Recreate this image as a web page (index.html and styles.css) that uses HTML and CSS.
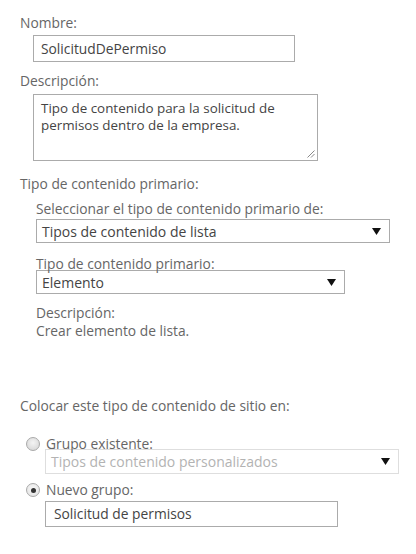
FILE: index.html
```html
<!DOCTYPE html>
<html lang="es">
<head>
<meta charset="utf-8">
<link rel="stylesheet" href="styles.css">
</head>
<body>
<div class="form">
  <div class="label l-nombre">Nombre:</div>
  <div class="input in-nombre">SolicitudDePermiso</div>

  <div class="label l-desc">Descripción:</div>
  <div class="textarea">Tipo de contenido para la solicitud de permisos dentro de la empresa.<svg class="grip" width="8" height="8" viewBox="0 0 8 8"><path d="M7.5 0.5L0.5 7.5M7.5 4L4 7.5" stroke="#888" stroke-width="1" fill="none"/></svg></div>

  <div class="label l-tipo">Tipo de contenido primario:</div>
  <div class="nested">
    <div class="label l-sel">Seleccionar el tipo de contenido primario de:</div>
    <div class="select sel1"><span>Tipos de contenido de lista</span><svg class="arrow" width="9" height="7" viewBox="0 0 9 7"><path d="M0 0H9L4.5 7Z" fill="#111"/></svg></div>
    <div class="label l-tipo2">Tipo de contenido primario:</div>
    <div class="select sel2"><span>Elemento</span><svg class="arrow" width="9" height="7" viewBox="0 0 9 7"><path d="M0 0H9L4.5 7Z" fill="#111"/></svg></div>
    <div class="label l-desc2">Descripción:</div>
    <div class="label text">Crear elemento de lista.</div>
  </div>

  <div class="label l-colocar">Colocar este tipo de contenido de sitio en:</div>
  <div class="radio-row r1"><span class="radio"></span><span class="label">Grupo existente:</span></div>
  <div class="select sel3 disabled"><span>Tipos de contenido personalizados</span><svg class="arrow" width="9" height="7" viewBox="0 0 9 7"><path d="M0 0H9L4.5 7Z" fill="#111"/></svg></div>
  <div class="radio-row r2"><span class="radio checked"></span><span class="label">Nuevo grupo:</span></div>
  <div class="input in-grupo">Solicitud de permisos</div>
</div>
</body>
</html>
```
FILE: styles.css
```css
html, body {
  margin: 0;
  padding: 0;
  background: #fff;
}
body {
  font-family: "Open Sans", "Noto Sans", sans-serif;
  font-size: 13.8px;
  color: #444;
}
.form {
  padding: 14px 0 0 20px;
}
.label {
  color: #666;
  font-size: 13.8px;
  line-height: 18px;
  height: 18px;
  white-space: nowrap;
}
.input {
  box-sizing: border-box;
  margin-left: 13px;
  border: 1px solid #ababab;
  height: 27px;
  line-height: 25px;
  padding-left: 7px;
  font-size: 13.8px;
  color: #444;
}
.in-nombre {
  width: 262px;
  margin-top: 3px;
}
.l-desc {
  margin-top: 10px;
}
.textarea {
  position: relative;
  box-sizing: border-box;
  margin-left: 13px;
  margin-top: 4px;
  width: 285px;
  height: 67px;
  border: 1px solid #ababab;
  padding: 5px 6px 5px 7px;
  font-size: 13.4px;
  line-height: 17px;
  color: #444;
}
.grip {
  position: absolute;
  right: 2px;
  bottom: 2px;
}
.l-tipo {
  margin-top: 14px;
}
.nested {
  margin-left: 16px;
  margin-top: 7px;
}
.select {
  box-sizing: border-box;
  display: flex;
  align-items: center;
  justify-content: space-between;
  border: 1px solid #ababab;
  height: 24px;
  padding: 0 8px 0 5px;
  font-size: 14px;
  color: #444;
}
.sel1 {
  width: 354px;
  margin-top: 1px;
}
.l-tipo2 {
  margin-top: 12px;
}
.sel2 {
  width: 309px;
  margin-top: -3px;
}
.l-desc2 {
  margin-top: 10px;
}
.text {
  line-height: 17px;
}
.l-colocar {
  margin-top: 57px;
}
.radio-row {
  display: flex;
  align-items: center;
  gap: 6px;
  margin-left: 6px;
}
.r1 {
  margin-top: 20px;
}
.radio {
  box-sizing: border-box;
  width: 14px;
  height: 14px;
  border-radius: 50%;
  border: 1px solid #a9a9a9;
  background: radial-gradient(circle at 50% 40%, #f4f4f4 0, #d2d2d2 100%);
  position: relative;
}
.radio.checked {
  background: radial-gradient(circle at 50% 40%, #f8f8f8 0, #e0e0e0 100%);
}
.radio.checked::after {
  content: "";
  position: absolute;
  left: 3.5px;
  top: 3.5px;
  width: 5px;
  height: 5px;
  border-radius: 50%;
  background: #333;
}
.sel3 {
  margin-left: 25px;
  width: 354px;
  height: 25px;
  margin-top: -4px;
}
.disabled {
  border-color: #dedede;
  color: #b3b3b3;
}
.r2 {
  margin-top: 7px;
}
.in-grupo {
  margin-left: 25px;
  width: 293px;
  height: 26px;
  line-height: 24px;
  margin-top: 2px;
  padding-left: 8px;
}
```
